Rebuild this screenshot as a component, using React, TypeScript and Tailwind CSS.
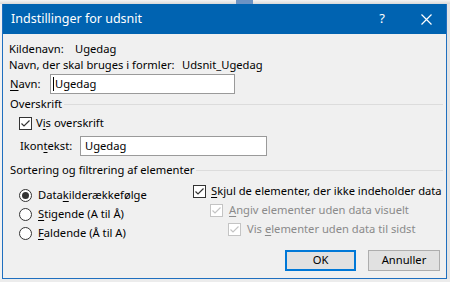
import type { ReactNode } from "react";

const font = { fontFamily: '"Segoe UI", "Noto Sans", "Open Sans", sans-serif' };

function Key({ children }: { children: ReactNode }) {
  return <span className="underline underline-offset-2 decoration-1">{children}</span>;
}

function CheckBox({ checked, disabled }: { checked?: boolean; disabled?: boolean }) {
  const stroke = disabled ? "#c4c4c4" : "#333333";
  return (
    <span
      className={`flex h-[13px] w-[13px] shrink-0 items-center justify-center border bg-white ${
        disabled ? "border-[#c4c4c4]" : "border-[#333333]"
      }`}
    >
      {checked && (
        <svg width="11" height="11" viewBox="0 0 11 11">
          <path d="M1.5 5.5 L4 8 L9.5 2.5" fill="none" stroke={stroke} strokeWidth="1.2" />
        </svg>
      )}
    </span>
  );
}

function Radio({ checked }: { checked?: boolean }) {
  return (
    <span className="flex h-[13px] w-[13px] shrink-0 items-center justify-center rounded-full border border-[#333333] bg-white">
      {checked && <span className="h-[7px] w-[7px] rounded-full bg-[#333333]" />}
    </span>
  );
}

function GroupTitle({ children }: { children: ReactNode }) {
  return (
    <div className="flex h-4 items-center whitespace-nowrap">
      <span className="pl-[7px] pr-[2px]">{children}</span>
      <span className="h-px flex-1 bg-[#dcdcdc]" />
    </div>
  );
}

export default function App() {
  return (
    <div
      className="flex h-[282px] w-[450px] flex-col overflow-hidden bg-[#ececec] text-[11.2px] text-black"
      style={font}
    >
      {/* backdrop strip */}
      <div className="flex h-[4px] shrink-0 bg-gradient-to-b from-[#f4f4f4] to-[#d9d9d9]">
        <div className="w-[236px]" />
        <div className="w-[17px] bg-[#6b93c4]" />
      </div>

      <div className="flex">
        <div className="w-[2px] shrink-0 bg-[#f2f2f2]" />

        <div className="flex h-[275px] w-[445px] flex-col border border-t-0 border-[#1f6fbf] bg-[#f0f0f0]">
          {/* title bar */}
          <div className="flex h-[30px] shrink-0 items-center bg-[#0063b1] text-white">
            <span className="pl-[8px] text-[12.5px]">Indstillinger for udsnit</span>
            <span className="ml-auto mr-[36px] text-[13px]">?</span>
            <svg width="11" height="11" viewBox="0 0 11 11" className="mr-[14px]">
              <path d="M0.5 0.5 L10.5 10.5 M10.5 0.5 L0.5 10.5" stroke="white" strokeWidth="1.2" />
            </svg>
          </div>

          {/* body */}
          <div className="flex flex-1 flex-col whitespace-nowrap pr-[3px]">
            <div className="mt-[7px] flex h-4 items-center pl-[6px]">
              <span className="w-[66px] shrink-0">Kildenavn:</span>
              <span>Ugedag</span>
            </div>
            <div className="flex h-4 items-center pl-[6px]">
              <span className="w-[173px] shrink-0">Navn, der skal bruges i formler:</span>
              <span>Udsnit_Ugedag</span>
            </div>
            <div className="mt-px flex h-[20px] items-center pl-[7px]">
              <span className="w-[40px] shrink-0">
                <Key>N</Key>avn:
              </span>
              <div className="flex h-[20px] w-[185px] items-center border border-[#9a9a9a] bg-white pl-[2px]">
                <span className="mr-px h-[14px] w-px bg-black" />
                <span>Ugedag</span>
              </div>
            </div>

            <div className="mt-[2px]">
              <GroupTitle>Overskrift</GroupTitle>
            </div>
            <div className="mt-[3px] flex h-4 items-center pl-[16px]">
              <CheckBox checked />
              <span className="pl-[4px]">
                V<Key>i</Key>s overskrift
              </span>
            </div>
            <div className="mt-[5px] flex h-[20px] items-center pl-[17px]">
              <span className="w-[60px] shrink-0">
                Ikon<Key>t</Key>ekst:
              </span>
              <div className="flex h-[20px] w-[187px] items-center border border-[#9a9a9a] bg-white pl-[4px]">
                Ugedag
              </div>
            </div>

            <div className="mt-[6px]">
              <GroupTitle>Sortering og filtrering af elementer</GroupTitle>
            </div>

            <div className="mt-[5px] flex">
              <div className="mt-[4px] flex w-[190px] shrink-0 flex-col gap-[3px] pl-[16px]">
                <div className="flex h-4 items-center gap-[6px]">
                  <Radio checked />
                  <span>
                    Data<Key>k</Key>ilderækkefølge
                  </span>
                </div>
                <div className="flex h-4 items-center gap-[6px]">
                  <Radio />
                  <span>
                    <Key>S</Key>tigende (A til Å)
                  </span>
                </div>
                <div className="flex h-4 items-center gap-[6px]">
                  <Radio />
                  <span>
                    <Key>F</Key>aldende (Å til A)
                  </span>
                </div>
              </div>

              <div className="flex flex-col gap-[3px]">
                <div className="flex h-4 items-center gap-[5px]">
                  <CheckBox checked />
                  <span>
                    <Key>S</Key>kjul de elementer, der ikke indeholder data
                  </span>
                </div>
                <div className="flex h-4 items-center gap-[6px] pl-[17px] text-[#8a8a8a]">
                  <CheckBox checked disabled />
                  <span>
                    <Key>A</Key>ngiv elementer uden data visuelt
                  </span>
                </div>
                <div className="flex h-4 items-center gap-[6px] pl-[35px] text-[#8a8a8a]">
                  <CheckBox checked disabled />
                  <span>
                    Vis <Key>e</Key>lementer uden data til sidst
                  </span>
                </div>
              </div>
            </div>

            <div className="mt-[9px] flex justify-end gap-[12px] pr-[3px]">
              <button className="h-[21px] w-[71px] border-2 border-[#0078d7] bg-[#e1e1e1]">OK</button>
              <button className="h-[21px] w-[72px] border border-[#adadad] bg-[#e1e1e1]">Annuller</button>
            </div>
          </div>
        </div>

        <div className="flex-1 bg-[#e4e4e4]" />
      </div>
    </div>
  );
}
